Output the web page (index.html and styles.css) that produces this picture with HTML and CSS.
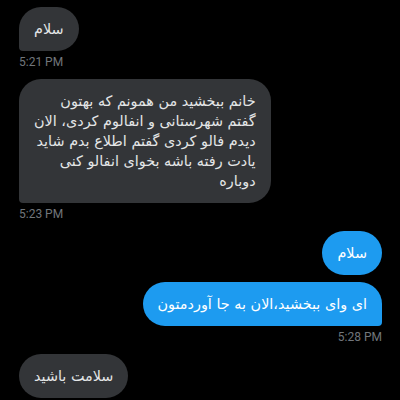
FILE: index.html
```html
<!DOCTYPE html>
<html lang="fa">
<head>
  <meta charset="UTF-8" />
  <title>پیام‌ها</title>
  <link rel="stylesheet" href="styles.css">
</head>
<body>
  <div class="chat">
    <div class="msg in">
      <div class="bubble tail">سلام</div>
      <div class="time">5:21 PM</div>
    </div>

    <div class="msg in">
      <div class="bubble tail">
        خانم ببخشید من همونم که بهتون<br>
        گفتم شهرستانی و انفالوم کردی، الان<br>
        دیدم فالو کردی گفتم اطلاع بدم شاید<br>
        یادت رفته باشه بخوای انفالو کنی<br>
        دوباره
      </div>
      <div class="time">5:23 PM</div>
    </div>

    <div class="msg out">
      <div class="bubble">سلام</div>
      <div class="bubble tail">ای وای ببخشید،الان به جا آوردمتون</div>
      <div class="time">5:28 PM</div>
    </div>

    <div class="msg in">
      <div class="bubble">سلامت باشید</div>
    </div>
  </div>
</body>
</html>
```

FILE: styles.css
```css
body {
  margin: 0;
  background: #000;
  font-family: "DejaVu Sans", "Noto Sans", sans-serif;
}

.chat {
  display: flex;
  flex-direction: column;
  padding: 7px 18px 0 19px;
}

.msg {
  display: flex;
  flex-direction: column;
  gap: 7px;
  margin-bottom: 9px;
}

.msg.in {
  align-items: flex-start;
}

.msg.out {
  align-items: flex-end;
}

.bubble {
  direction: rtl;
  text-align: right;
  font-size: 14.4px;
  line-height: 20px;
  padding: 12px 15px;
  border-radius: 22px;
  background: #333538;
  color: #e4e6e7;
}

.msg.in .bubble.tail {
  border-bottom-left-radius: 4px;
}

.msg.out .bubble {
  background: #1d9bf0;
  color: #fff;
}

.msg.out .bubble.tail {
  border-bottom-right-radius: 4px;
}

.time {
  font-family: "Roboto", "Liberation Sans", sans-serif;
  font-size: 12px;
  line-height: 16px;
  color: #71767b;
  margin-top: -4px;
}
```
